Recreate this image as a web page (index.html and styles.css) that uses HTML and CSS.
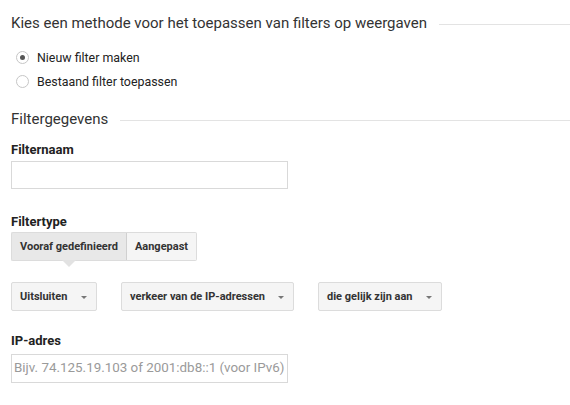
FILE: index.html
```html
<!DOCTYPE html>
<html>
<head>
<meta charset="utf-8">
<link rel="stylesheet" href="styles.css">
</head>
<body>
<div class="page">
  <div class="section-head first">
    <span class="section-title">Kies een methode voor het toepassen van filters op weergaven</span>
    <span class="rule"></span>
  </div>
  <div class="radios">
    <label class="radio-row"><span class="radio checked"></span><span>Nieuw filter maken</span></label>
    <label class="radio-row"><span class="radio"></span><span>Bestaand filter toepassen</span></label>
  </div>
  <div class="section-head second">
    <span class="section-title">Filtergegevens</span>
    <span class="rule"></span>
  </div>
  <div class="field-label">Filternaam</div>
  <div class="text-input"></div>
  <div class="field-label type-label">Filtertype</div>
  <div class="tabs">
    <div class="tab active">Vooraf gedefinieerd</div>
    <div class="tab">Aangepast</div>
  </div>
  <div class="selects">
    <div class="select s1"><span>Uitsluiten</span><span class="caret"></span></div>
    <div class="select s2"><span>verkeer van de IP-adressen</span><span class="caret"></span></div>
    <div class="select s3"><span>die gelijk zijn aan</span><span class="caret"></span></div>
  </div>
  <div class="field-label ip-label">IP-adres</div>
  <div class="text-input placeholder">Bijv. 74.125.19.103 of 2001:db8::1 (voor IPv6)</div>
</div>
</body>
</html>
```
FILE: styles.css
```css
html, body {
  margin: 0;
  padding: 0;
  background: #fff;
}
body {
  font-family: Roboto, "Liberation Sans", Arial, sans-serif;
  color: #222;
}
.page {
  padding-left: 11px;
  width: 559px;
}
.section-head {
  display: flex;
  align-items: center;
}
.section-head.first {
  padding-top: 13px;
  height: 20px;
}
.section-head.second {
  margin-top: 20px;
  height: 20px;
}
.section-title {
  font-size: 15px;
  color: #333;
  white-space: nowrap;
}
.rule {
  flex: 1;
  border-top: 1px solid #e3e3e3;
  margin-left: 12px;
  margin-top: 2px;
}
.radios {
  margin-top: 16px;
  display: flex;
  flex-direction: column;
  gap: 8px;
}
.radio-row {
  display: flex;
  align-items: center;
  font-size: 12.4px;
  color: #222;
  height: 16px;
}
.radio {
  box-sizing: border-box;
  width: 13px;
  height: 13px;
  border: 1px solid #c6c6c6;
  border-radius: 50%;
  margin-left: 5px;
  margin-right: 8px;
  display: flex;
  align-items: center;
  justify-content: center;
  background: #fff;
}
.radio.checked::after {
  content: "";
  width: 5px;
  height: 5px;
  border-radius: 50%;
  background: #555;
}
.field-label {
  font-size: 13px;
  font-weight: bold;
  color: #222;
  margin-top: 13px;
  height: 16px;
  line-height: 16px;
}
.text-input {
  box-sizing: border-box;
  width: 277px;
  height: 28px;
  border: 1px solid #d9d9d9;
  margin-top: 3px;
  font-size: 13.4px;
  color: #9a9a9a;
  padding-left: 2px;
  line-height: 26px;
  white-space: nowrap;
  overflow: hidden;
}
.field-label.type-label {
  margin-top: 25px;
}
.tabs {
  display: flex;
  margin-top: 2px;
  height: 29px;
}
.tab {
  box-sizing: border-box;
  height: 29px;
  line-height: 27px;
  font-size: 11px;
  font-weight: bold;
  color: #333;
  border: 1px solid #dcdcdc;
  background: #f5f5f5;
  padding: 0 8px;
  position: relative;
  white-space: nowrap;
}
.tab.active {
  background: #e8e8e8;
  border-right: 1px solid #d0d0d0;
  border-radius: 2px 0 0 2px;
}
.tab + .tab {
  border-left: none;
  border-radius: 0 2px 2px 0;
}
.tab.active::after {
  content: "";
  position: absolute;
  left: 50%;
  bottom: -7px;
  margin-left: -7px;
  border-left: 7px solid transparent;
  border-right: 7px solid transparent;
  border-top: 7px solid #e2e2e2;
}
.selects {
  display: flex;
  gap: 24px;
  margin-top: 21px;
}
.select {
  box-sizing: border-box;
  height: 29px;
  font-size: 11px;
  font-weight: bold;
  color: #333;
  border: 1px solid #dcdcdc;
  background: #f5f5f5;
  border-radius: 2px;
  padding-left: 8px;
  display: flex;
  align-items: center;
  white-space: nowrap;
}
.select.s1 { width: 86px; }
.select.s2 { width: 173px; }
.select.s3 { width: 124px; }
.caret {
  margin-left: auto;
  margin-right: 9px;
  flex: none;
  width: 0;
  height: 0;
  border-left: 3.5px solid transparent;
  border-right: 3.5px solid transparent;
  border-top: 3.5px solid #777;
  margin-top: 2px;
}
.field-label.ip-label {
  margin-top: 22px;
}
.text-input.placeholder {
  margin-top: 5px;
  height: 29px;
}
```
